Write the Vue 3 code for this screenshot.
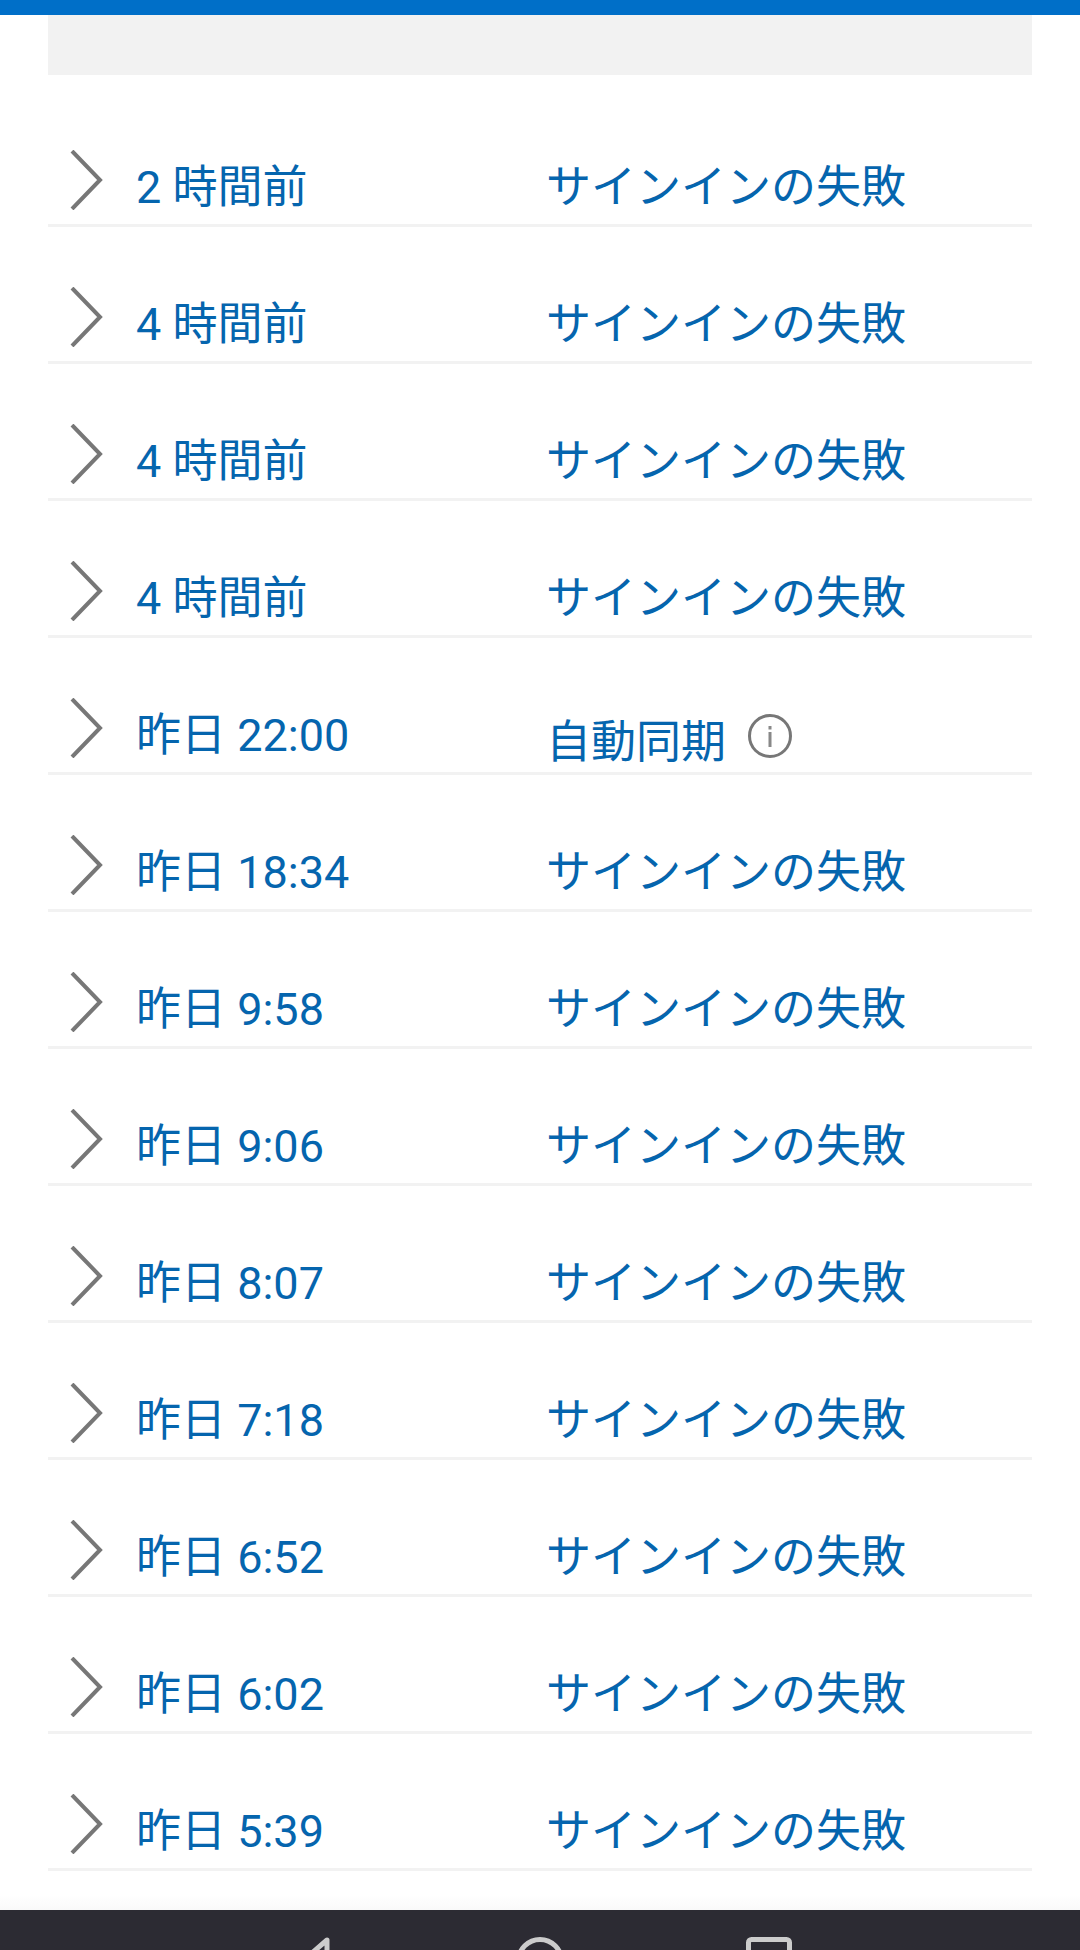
<template>
  <div class="page">
    <div class="top-bar"></div>
    <div class="content">
      <div class="gray-box"></div>
      <div class="list">
        <div v-for="(r, i) in rows" :key="i" class="row">
          <svg class="chevron" width="34" height="60" viewBox="0 0 34 60">
            <path d="M2 1 L30 30 L2 59" fill="none" stroke="#777" stroke-width="4" />
          </svg>
          <span class="time">{{ r.time }}</span>
          <span v-if="r.info" class="status sync">
            {{ r.status }}
            <svg class="info" width="46" height="46" viewBox="0 0 46 46">
              <circle cx="23" cy="23" r="20.5" fill="none" stroke="#777" stroke-width="3" />
              <rect x="21.5" y="19" width="3" height="15" fill="#888" />
              <rect x="21.5" y="13" width="3" height="3.5" fill="#888" />
            </svg>
          </span>
          <span v-else class="status">{{ r.status }}</span>
        </div>
      </div>
    </div>
    <div class="nav-bar">
      <svg class="nav-icon" width="50" height="40" viewBox="0 0 50 40">
        <path d="M36 3 L14 22 L36 41 Z" fill="none" stroke="#ccc" stroke-width="5" stroke-linejoin="round" />
      </svg>
      <svg class="nav-icon" width="50" height="40" viewBox="0 0 50 40">
        <circle cx="25" cy="24" r="21.5" fill="none" stroke="#ccc" stroke-width="5" />
      </svg>
      <svg class="nav-icon square" width="50" height="40" viewBox="0 0 50 40">
        <rect x="4.5" y="2.5" width="41" height="41" rx="3" fill="none" stroke="#ccc" stroke-width="5" />
      </svg>
    </div>
  </div>
</template>

<script setup>
const fail = 'サインインの失敗'
const rows = [
  { time: '2 時間前', status: fail },
  { time: '4 時間前', status: fail },
  { time: '4 時間前', status: fail },
  { time: '4 時間前', status: fail },
  { time: '昨日 22:00', status: '自動同期', info: true },
  { time: '昨日 18:34', status: fail },
  { time: '昨日 9:58', status: fail },
  { time: '昨日 9:06', status: fail },
  { time: '昨日 8:07', status: fail },
  { time: '昨日 7:18', status: fail },
  { time: '昨日 6:52', status: fail },
  { time: '昨日 6:02', status: fail },
  { time: '昨日 5:39', status: fail }
]
</script>

<style>
html, body {
  margin: 0;
  background: #fff;
}
</style>

<style scoped>
.page {
  width: 1080px;
  height: 1950px;
  display: flex;
  flex-direction: column;
  overflow: hidden;
  font-family: Roboto, "Noto Sans CJK JP", sans-serif;
  background: #fff;
}
.top-bar {
  height: 15px;
  background: #006fc8;
}
.content {
  flex: 1;
  padding: 0 48px;
  background: linear-gradient(to top, #f9f9f9, #fff 15px);
}
.gray-box {
  height: 60px;
  background: #f2f2f2;
}
.list {
  padding-top: 15px;
}
.row {
  position: relative;
  height: 137px;
  box-sizing: border-box;
  border-bottom: 3px solid #f2f2f2;
  display: flex;
  align-items: flex-end;
  color: #0565ae;
  font-size: 45px;
  line-height: 64px;
}
.chevron {
  position: absolute;
  left: 22px;
  bottom: 14px;
}
.time {
  margin-left: 88px;
  width: 410px;
  padding-bottom: 4px;
}
.status {
  padding-bottom: 4px;
}
.sync {
  display: flex;
  align-items: center;
  gap: 21px;
  padding-bottom: 0;
  margin-bottom: -3px;
}
.info {
  margin-bottom: 14px;
}
.nav-bar {
  height: 40px;
  box-sizing: border-box;
  padding: 27px 0 0 291px;
  background: #2c2b33;
  display: flex;
  gap: 174px;
  overflow: hidden;
}
.nav-icon {
  flex-shrink: 0;
}
.square {
  margin-left: 5px;
}
</style>
